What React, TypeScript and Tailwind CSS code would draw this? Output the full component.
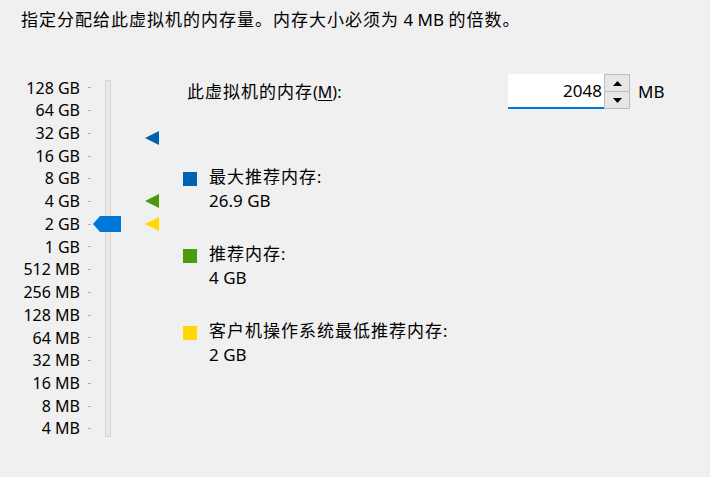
import React from 'react';

const scale = [
  '128 GB', '64 GB', '32 GB', '16 GB', '8 GB', '4 GB', '2 GB', '1 GB',
  '512 MB', '256 MB', '128 MB', '64 MB', '32 MB', '16 MB', '8 MB', '4 MB',
];

const legend = [
  { color: '#0063b1', label: '最大推荐内存', value: '26.9 GB' },
  { color: '#4b9b0f', label: '推荐内存', value: '4 GB' },
  { color: '#ffd800', label: '客户机操作系统最低推荐内存', value: '2 GB' },
];

// CJK runs are drawn a bit larger than latin text, like YaHei UI
const Zh: React.FC<{ children: React.ReactNode }> = ({ children }) => (
  <span className="text-[17px] tracking-[1px]">{children}</span>
);

const Marker: React.FC<{ color: string; top: string }> = ({ color, top }) => (
  <svg className={`absolute left-[145px] ${top}`} width="14" height="14" viewBox="0 0 14 14">
    <polygon points="0,7 14,0 14,14" fill={color} />
  </svg>
);

export default function App() {
  return (
    <div className="w-[710px] h-[477px] bg-[#f0f0f0] text-black text-[16px] font-['Noto_Sans','Noto_Sans_CJK_SC',sans-serif] overflow-hidden">
      {/* Header */}
      <div className="h-[40px] pl-[21px] pt-[8px] leading-[24px]">
        <Zh>指定分配给此虚拟机的内存量。内存大小必须为</Zh>
        <span className="text-[17px]"> 4 MB </span>
        <Zh>的倍数。</Zh>
      </div>

      <div className="flex">
        {/* Slider */}
        <div className="relative w-[183px] flex">
          <div className="w-[80px] mt-[36.6px] flex flex-col">
            {scale.map((s) => (
              <div key={s} className="h-[22.73px] leading-[22.73px] text-right whitespace-nowrap">
                {s}
              </div>
            ))}
          </div>
          <div className="ml-[8px] w-[3px] mt-[36.6px] flex flex-col">
            {scale.map((s) => (
              <div key={s} className="h-[22.73px] flex items-center">
                <div className="h-px w-[3px] bg-[#b0b0b0]" />
              </div>
            ))}
          </div>
          <div className="ml-[14px] mt-[40px] w-[6px] h-[357px] border border-[#d6d6d6] bg-[#e7e7e7]" />

          <svg className="absolute left-[93px] top-[176px]" width="28" height="16" viewBox="0 0 28 16">
            <polygon points="0,8 7,0 28,0 28,16 7,16" fill="#0078d7" />
          </svg>
          <Marker color="#0063b1" top="top-[91px]" />
          <Marker color="#4b9b0f" top="top-[154px]" />
          <Marker color="#ffd800" top="top-[177px]" />
        </div>

        {/* Right side */}
        <div className="flex-1 pt-[34px]">
          <div className="flex items-center h-[35px]">
            <div className="w-[325px] pl-[4px] whitespace-nowrap">
              <Zh>此虚拟机的内存</Zh>(<span className="underline underline-offset-2">M</span>):
            </div>
            <div className="w-[96px] h-[35px] bg-white border-b-2 border-[#0078d7] flex items-center justify-end pr-[2px] text-[17px]">
              2048
            </div>
            <div className="w-[26px] h-[35px] flex flex-col border border-[#bcbcbc]">
              <div className="flex-1 flex items-center justify-center bg-[#e6e6e6] border-b border-[#bcbcbc]">
                <svg width="9" height="5" viewBox="0 0 9 5"><polygon points="0,5 4.5,0 9,5" fill="#000" /></svg>
              </div>
              <div className="flex-1 flex items-center justify-center bg-[#e6e6e6]">
                <svg width="9" height="5" viewBox="0 0 9 5"><polygon points="0,0 9,0 4.5,5" fill="#000" /></svg>
              </div>
            </div>
            <div className="ml-[8px] text-[17px]">MB</div>
          </div>

          <div className="mt-[56px] flex flex-col gap-[29px]">
            {legend.map((l) => (
              <div key={l.label} className="flex">
                <div className="w-[14px] h-[14px] mt-[7px]" style={{ backgroundColor: l.color }} />
                <div className="ml-[12px] flex flex-col">
                  <div className="h-[24px] leading-[24px] whitespace-nowrap">
                    <Zh>{l.label}</Zh>:
                  </div>
                  <div className="h-[24px] leading-[24px] text-[17px]">{l.value}</div>
                </div>
              </div>
            ))}
          </div>
        </div>
      </div>
    </div>
  );
}
